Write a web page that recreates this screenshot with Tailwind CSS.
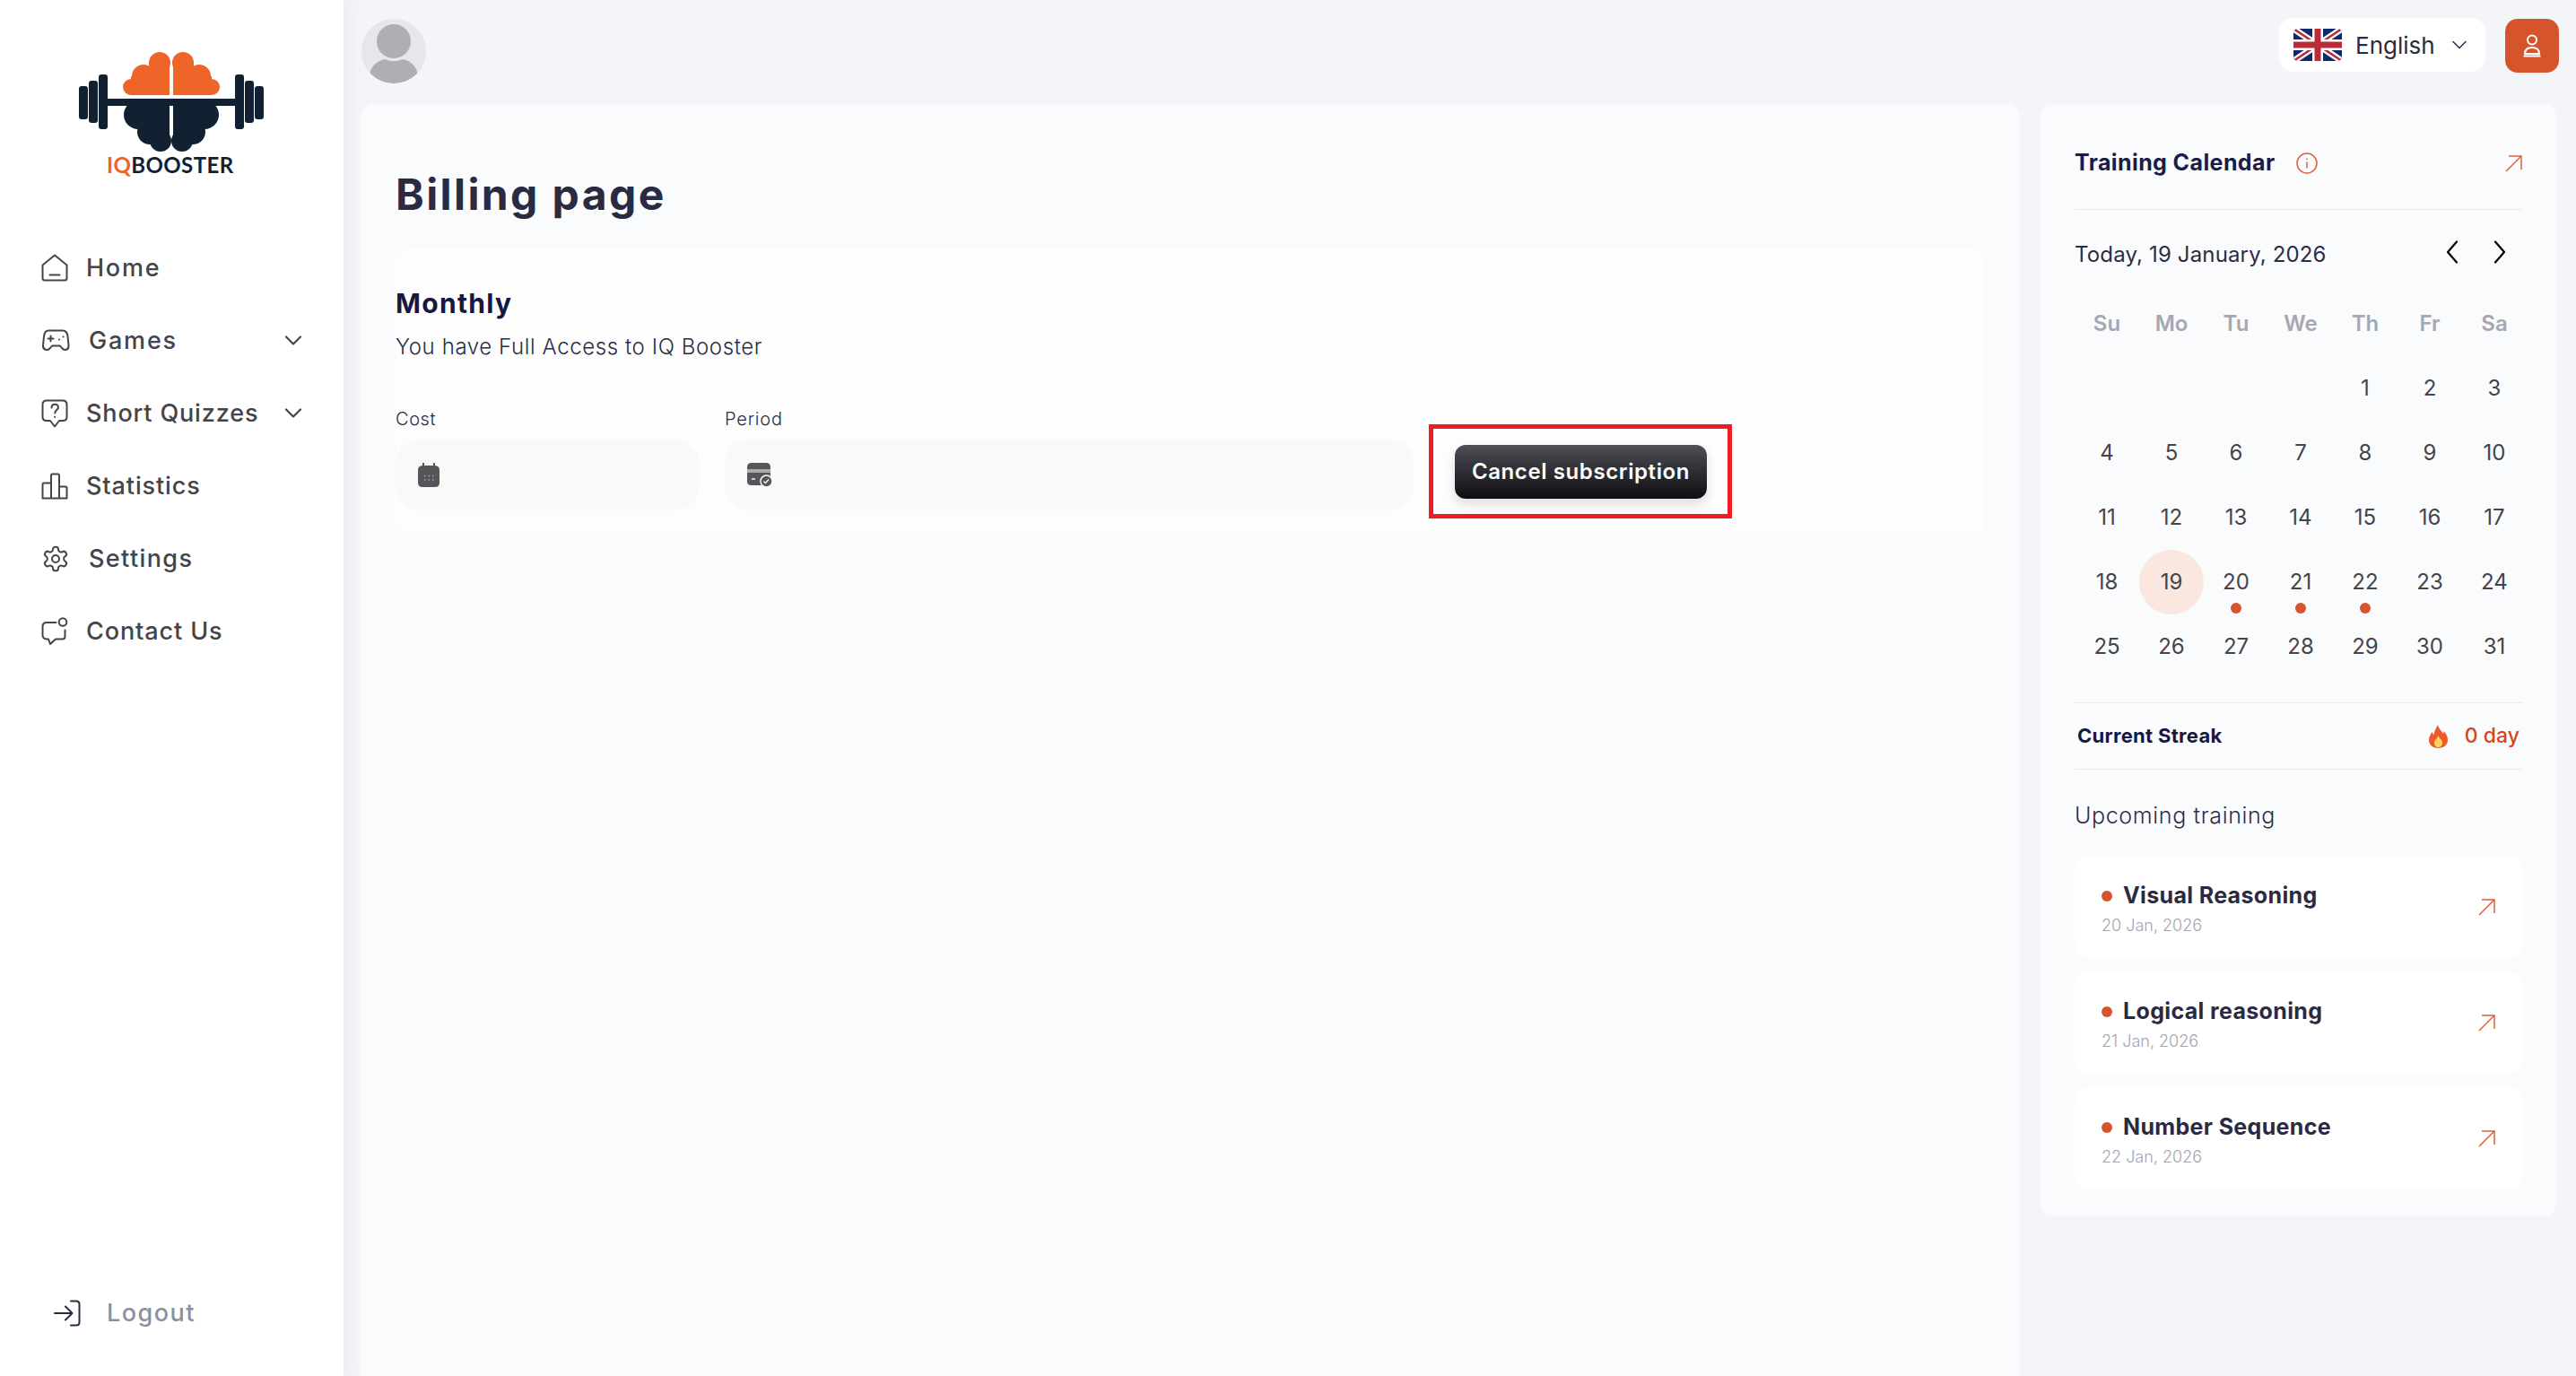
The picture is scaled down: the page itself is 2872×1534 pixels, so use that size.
<!DOCTYPE html>
<html lang="en">
<head>
  <meta charset="UTF-8">
  <meta name="viewport" content="width=device-width, initial-scale=1.0">
  <title>Billing page</title>
  <script src="https://cdn.jsdelivr.net/npm/@tailwindcss/browser@4"></script>
</head>
<body class="bg-[#f4f5f9] font-['Inter',sans-serif] overflow-hidden">
  <div class="flex h-[1534px] w-[2872px]">

    <!-- Sidebar -->
    <aside class="w-[383px] shrink-0 bg-white flex flex-col shadow-[6px_0_14px_rgba(225,227,238,0.5)] z-10">
      <div class="h-[258px] shrink-0">
        <svg width="383" height="210" viewBox="0 0 383 210" class="block">
          <g fill="#ee6429">
            <circle cx="178" cy="70" r="12"/><circle cx="160" cy="85" r="13"/><circle cx="146" cy="97" r="9"/>
            <rect x="146" y="85" width="43" height="21"/><rect x="166" y="70" width="23" height="20"/>
            <circle cx="204" cy="70" r="12"/><circle cx="222" cy="85" r="13"/><circle cx="236" cy="97" r="9"/>
            <rect x="193" y="85" width="43" height="21"/><rect x="193" y="70" width="23" height="20"/>
          </g>
          <g fill="#122131">
            <rect x="88" y="96" width="10" height="37" rx="3"/><rect x="99" y="90" width="10" height="47" rx="3"/><rect x="110" y="83" width="10" height="61" rx="3"/>
            <rect x="262" y="83" width="10" height="61" rx="3"/><rect x="273" y="90" width="10" height="47" rx="3"/><rect x="284" y="96" width="10" height="37" rx="3"/>
            <rect x="120" y="110" width="142" height="8"/>
            <circle cx="154" cy="128" r="16"/><circle cx="167" cy="147" r="14"/><circle cx="179" cy="157" r="12"/>
            <rect x="154" y="116" width="35" height="28"/><rect x="168" y="130" width="21" height="25"/>
            <circle cx="228" cy="128" r="16"/><circle cx="215" cy="147" r="14"/><circle cx="203" cy="157" r="12"/>
            <rect x="193" y="116" width="35" height="28"/><rect x="193" y="130" width="21" height="25"/>
            <rect x="188" y="116" width="6" height="2"/>
          </g>
          <text x="119" y="193" font-family="Lato" font-size="24" font-weight="700" letter-spacing="0.4" fill="#ee6429">IQ<tspan fill="#122131">BOOSTER</tspan></text>
        </svg>
      </div>

      <nav class="flex flex-col pl-[46px] pr-[47px] text-[27px] leading-[40px] font-medium text-[#444449]">
        <a href="#" class="h-[81px] flex items-center">
          <svg width="30" height="31" viewBox="0 0 30 31" fill="none" stroke="#444449" stroke-width="2" stroke-linejoin="round" stroke-linecap="round" class="shrink-0"><path d="M1.500 12.500 15 1.500l13.500 11V27q0 2.500-2.500 2.500H4Q1.500 29.500 1.500 27Z"/><path d="M9.500 23.500h11"/></svg>
          <span class="ml-[20px] tracking-[1.75px]">Home</span>
        </a>
        <a href="#" class="h-[81px] flex items-center">
          <svg width="32" height="25" viewBox="0 0 32 25" fill="none" stroke="#444449" stroke-width="2" stroke-linecap="round" stroke-linejoin="round" class="shrink-0"><path d="M8 1.500h16c3.500 0 5 2.500 5.500 6.500l1 10c.5 5-4.500 6.500-7.500 3l-2-2.500h-9L10 21c-3 3.500-8.500 2-8-3l1-10C3.500 4 4.500 1.500 8 1.500Z"/><path d="M7.500 10.500h6M10.500 7.500v6M20 11.500h.1M24.500 8.500h.1"/></svg>
          <span class="ml-[21px] tracking-[1.8px]">Games</span>
          <svg width="18" height="11" viewBox="0 0 18 11" fill="none" stroke="#444449" stroke-width="2.200" stroke-linecap="round" stroke-linejoin="round" class="ml-auto"><path d="M1 1.500 9 9.500l8-8"/></svg>
        </a>
        <a href="#" class="h-[81px] flex items-center">
          <svg width="30" height="32" viewBox="0 0 30 32" fill="none" stroke="#444449" stroke-width="2" stroke-linecap="round" stroke-linejoin="round" class="shrink-0"><path d="M6 1.500h18q4.500 0 4.500 4.500v14q0 4-4.500 4h-4l-5 6.500-5-6.500H6q-4.500 0-4.500-4V6Q1.500 1.500 6 1.500Z"/><path d="M11.500 9.500c0-5 7.500-5 7.500-.5 0 3-3.800 3-3.800 6.500M15.200 19.800v.1"/></svg>
          <span class="ml-[20px] whitespace-nowrap tracking-[0.85px]">Short Quizzes</span>
          <svg width="18" height="11" viewBox="0 0 18 11" fill="none" stroke="#444449" stroke-width="2.200" stroke-linecap="round" stroke-linejoin="round" class="ml-auto"><path d="M1 1.500 9 9.500l8-8"/></svg>
        </a>
        <a href="#" class="h-[81px] flex items-center">
          <svg width="30" height="30" viewBox="0 0 30 30" fill="none" stroke="#444449" stroke-width="2" stroke-linejoin="round" class="shrink-0"><path d="M1.500 28.500V13q0-1.500 1.500-1.500h8V28.500ZM11 28.500V3q0-1.500 1.500-1.500h6Q20 1.500 20 3V28.500ZM20 28.500V15.500h7q1.500 0 1.500 1.500V28.500Z"/></svg>
          <span class="ml-[20px] tracking-[0.9px]">Statistics</span>
        </a>
        <a href="#" class="h-[81px] flex items-center">
          <svg width="32" height="32" viewBox="0 0 24 24" fill="none" stroke="#444449" stroke-width="1.500" stroke-linecap="round" stroke-linejoin="round" class="shrink-0"><path d="M12.220 2h-.44a2 2 0 0 0-2 2v.18a2 2 0 0 1-1 1.730l-.43.25a2 2 0 0 1-2 0l-.15-.08a2 2 0 0 0-2.730.73l-.22.38a2 2 0 0 0 .73 2.730l.15.1a2 2 0 0 1 1 1.720v.51a2 2 0 0 1-1 1.740l-.15.09a2 2 0 0 0-.73 2.730l.22.38a2 2 0 0 0 2.730.73l.15-.08a2 2 0 0 1 2 0l.43.25a2 2 0 0 1 1 1.730V20a2 2 0 0 0 2 2h.44a2 2 0 0 0 2-2v-.18a2 2 0 0 1 1-1.730l.43-.25a2 2 0 0 1 2 0l.15.08a2 2 0 0 0 2.730-.73l.22-.39a2 2 0 0 0-.73-2.730l-.15-.08a2 2 0 0 1-1-1.740v-.5a2 2 0 0 1 1-1.740l.15-.09a2 2 0 0 0 .73-2.730l-.22-.38a2 2 0 0 0-2.730-.73l-.15.08a2 2 0 0 1-2 0l-.43-.25a2 2 0 0 1-1-1.730V4a2 2 0 0 0-2-2z"/><circle cx="12" cy="12" r="3"/></svg>
          <span class="ml-[21px] tracking-[1.4px]">Settings</span>
        </a>
        <a href="#" class="h-[81px] flex items-center">
          <svg width="30" height="31" viewBox="0 0 30 31" fill="none" stroke="#444449" stroke-width="2" stroke-linecap="round" stroke-linejoin="round" class="shrink-0"><path d="M16.500 6H6Q1.500 6 1.500 10.500V20Q1.500 24 6 24.500L8 24.500l2 5.500 6-5.500h7.500q3 0 3-3V14.500"/><circle cx="24" cy="5.500" r="4.300"/></svg>
          <span class="ml-[20px] tracking-[0.9px]">Contact Us</span>
        </a>
      </nav>

      <a href="#" class="mt-auto mb-[50px] ml-[60px] h-[40px] flex items-center text-[27px] font-medium text-[#8f8f9b]">
        <svg width="30" height="30" viewBox="0 0 30 30" fill="none" stroke="#2a2b42" stroke-width="2" stroke-linecap="round" stroke-linejoin="round" class="shrink-0"><path d="M19 1.500h6q3.500 0 3.500 3.500v20q0 3.500-3.500 3.500h-6M1 15h19M13 7.500l7.500 7.500-7.500 7.500"/></svg>
        <span class="ml-[29px] tracking-[1.5px]">Logout</span>
      </a>
    </aside>

    <!-- Main -->
    <div class="flex-1 min-w-0 flex flex-col">
      <header class="h-[116px] shrink-0 flex items-start pl-[20px] pr-[19px]">
        <svg width="72" height="72" viewBox="0 0 72 72" class="mt-[21px] shrink-0">
          <clipPath id="avatarClip"><circle cx="36" cy="36" r="36"/></clipPath>
          <circle cx="36" cy="36" r="36" fill="#e6e7e9"/>
          <g clip-path="url(#avatarClip)" fill="#aeafb2">
            <circle cx="36" cy="25" r="19"/>
            <path d="M8 72C8 56 14 47 27 45c5 3 13 3 18 0 13 2 19 11 19 27Z"/>
          </g>
        </svg>
        <div class="ml-auto mt-[20px] h-[60px] w-[230px] bg-white rounded-[16px] flex items-center pl-[16px]">
          <svg width="54" height="36" viewBox="0 0 54 36" class="shrink-0">
            <clipPath id="flagClip"><rect width="54" height="36" rx="5"/></clipPath>
            <g clip-path="url(#flagClip)">
              <rect width="54" height="36" fill="#0f2a6b"/>
              <path d="M0 0 54 36M54 0 0 36" stroke="#fff" stroke-width="7"/>
              <path d="M0 0 54 36M54 0 0 36" stroke="#bd2b39" stroke-width="2.500"/>
              <path d="M27 0V36M0 18H54" stroke="#fff" stroke-width="12"/>
              <path d="M27 0V36M0 18H54" stroke="#bd2b39" stroke-width="7"/>
            </g>
          </svg>
          <span class="ml-[15px] text-[26px] text-[#2a2b42]">English</span>
          <svg width="16" height="10" viewBox="0 0 16 10" fill="none" stroke="#2a2b42" stroke-width="1.500" stroke-linecap="round" stroke-linejoin="round" class="ml-auto mr-[21px]"><path d="M1 1.500 8 8.500l7-7"/></svg>
        </div>
        <button class="ml-[22px] mt-[21px] w-[60px] h-[60px] rounded-[14px] bg-[#d6542b] flex items-center justify-center">
          <svg width="20" height="26" viewBox="0 0 20 26" fill="none" stroke="#fff" stroke-width="2"><circle cx="10" cy="6.500" r="5"/><path d="M2 22q0-7 8-7t8 7Z"/><path d="M.5 24.500h19"/></svg>
        </button>
      </header>

      <div class="flex-1 min-h-0 flex pl-[19px] pr-[22px]">
        <!-- Billing card -->
        <main class="w-[1850px] shrink-0 bg-[#fafbfd] rounded-t-[14px] pl-[39px] pr-[40px] pt-[71px]">
          <h1 class="h-[60px] leading-[60px] text-[48px] font-bold tracking-[2.400px] text-[#2a2b42]">Billing page</h1>
          <section class="mt-[30px] h-[321px] bg-[#fdfdfe] rounded-[14px] pt-[41px]">
            <h2 class="h-[40px] leading-[40px] text-[30px] font-bold tracking-[1.300px] text-[#17183f]">Monthly</h2>
            <p class="mt-[13px] h-[32px] leading-[32px] text-[24px] font-light tracking-[0.6px] text-[#2c2c44]">You have Full Access to IQ Booster</p>
            <div class="mt-[50px] flex items-end">
              <div class="w-[338px] shrink-0">
                <label class="block h-[28px] leading-[28px] text-[20px] font-light tracking-[0.6px] text-[#2c2c44]">Cost</label>
                <div class="mt-[9px] h-[79px] rounded-[26px] bg-[#faf9f7] flex items-center pl-[25px]">
                  <svg width="24" height="27" viewBox="0 0 24 27"><path fill="#55555a" d="M5 0h2v3h10V0h2v3q5 .5 5 5v14q0 5-5 5H5q-5 0-5-5V8Q0 3.500 5 3Z"/><path stroke="#a9a9ad" stroke-width="1.500" stroke-dasharray="1.500 3" d="M7 14.500h11M7 19h11"/></svg>
                </div>
              </div>
              <div class="ml-[29px] w-[768px] shrink-0">
                <label class="block h-[28px] leading-[28px] text-[20px] font-light tracking-[0.8px] text-[#2c2c44]">Period</label>
                <div class="mt-[9px] h-[79px] rounded-[26px] bg-[#faf9f7] flex items-center pl-[25px]">
                  <svg width="28" height="27" viewBox="0 0 28 27"><path fill="#55555a" d="M5 0h16q5 0 5 5v16q0 4-5 4H5q-5 0-5-4V5Q0 0 5 0Z"/><rect y="7" width="26" height="4" fill="#a9a9ad"/><path stroke="#faf9f7" stroke-width="1.500" d="M5 18h4"/><circle cx="21.500" cy="20.500" r="6.500" fill="#55555a" stroke="#faf9f7" stroke-width="1.500"/><path d="m18.500 20.500 2 2 3.500-4" fill="none" stroke="#faf9f7" stroke-width="1.300"/></svg>
                </div>
              </div>
              <div class="relative ml-[46px] mb-[13px]">
                <button class="w-[281px] h-[60px] rounded-[12px] bg-gradient-to-b from-[#4f4f57] to-[#0f0f13] text-white text-[24px] font-semibold tracking-[0.6px] shadow-[0_6px_12px_rgba(60,40,40,0.15)]">Cancel subscription</button>
                <div class="absolute -left-[29px] -right-[28px] -top-[23px] -bottom-[22px] border-[5px] border-[#ee1c25] pointer-events-none"></div>
              </div>
            </div>
          </section>
        </main>

        <!-- Calendar card -->
        <aside class="ml-[23px] w-[575px] shrink-0 self-start bg-[#fafbfd] rounded-[14px] px-[38px] pb-[30px]">
          <div class="pt-[48px] pb-[33px] border-b border-[#e8eaf0]">
            <div class="h-[36px] flex items-center">
              <span class="text-[25px] font-bold tracking-[0.4px] text-[#1a1c4a]">Training Calendar</span>
              <svg width="24" height="24" viewBox="0 0 24 24" fill="none" stroke="#e0603a" stroke-width="1.500" class="ml-[23px]"><circle cx="12" cy="12" r="11"/><path d="M12 10.500v7M12 6.500v1.500"/></svg>
              <svg width="19" height="19" viewBox="0 0 19 19" fill="none" stroke="#e0603a" stroke-width="1.500" class="ml-auto"><path d="M1 18 18 1M4 1h14v15"/></svg>
            </div>
          </div>
          <div class="mt-[32px] h-[36px] flex items-center text-[24px] tracking-[0.15px] text-[#2c2c44]">
            <span>Today, 19 January, 2026</span>
            <svg width="14" height="26" viewBox="0 0 14 26" fill="none" stroke="#000" stroke-width="2.200" stroke-linecap="round" stroke-linejoin="round" class="ml-auto mr-[39px] -mt-[6px]"><path d="M12 1.500 2 13l10 11.500"/></svg>
            <svg width="14" height="26" viewBox="0 0 14 26" fill="none" stroke="#000" stroke-width="2.200" stroke-linecap="round" stroke-linejoin="round" class="mr-[18px] -mt-[6px]"><path d="M2 1.500 12 13 2 24.500"/></svg>
          </div>

          <div class="mt-[23px] w-[504px] grid grid-cols-7 auto-rows-[72px] text-center text-[24px] text-[#444449]">
            <div class="flex items-center justify-center font-semibold text-[#a5a7b3]">Su</div>
            <div class="flex items-center justify-center font-semibold text-[#a5a7b3]">Mo</div>
            <div class="flex items-center justify-center font-semibold text-[#a5a7b3]">Tu</div>
            <div class="flex items-center justify-center font-semibold text-[#a5a7b3]">We</div>
            <div class="flex items-center justify-center font-semibold text-[#a5a7b3]">Th</div>
            <div class="flex items-center justify-center font-semibold text-[#a5a7b3]">Fr</div>
            <div class="flex items-center justify-center font-semibold text-[#a5a7b3]">Sa</div>

            <div></div><div></div><div></div><div></div>
            <div class="flex items-center justify-center">1</div>
            <div class="flex items-center justify-center">2</div>
            <div class="flex items-center justify-center">3</div>

            <div class="flex items-center justify-center">4</div>
            <div class="flex items-center justify-center">5</div>
            <div class="flex items-center justify-center">6</div>
            <div class="flex items-center justify-center">7</div>
            <div class="flex items-center justify-center">8</div>
            <div class="flex items-center justify-center">9</div>
            <div class="flex items-center justify-center">10</div>

            <div class="flex items-center justify-center">11</div>
            <div class="flex items-center justify-center">12</div>
            <div class="flex items-center justify-center">13</div>
            <div class="flex items-center justify-center">14</div>
            <div class="flex items-center justify-center">15</div>
            <div class="flex items-center justify-center">16</div>
            <div class="flex items-center justify-center">17</div>

            <div class="flex items-center justify-center">18</div>
            <div class="flex items-center justify-center rounded-full bg-[#f9e7e0]">19</div>
            <div class="relative flex items-center justify-center">20<span class="absolute left-[30px] top-[59px] w-[12px] h-[12px] rounded-full bg-[#d6542b]"></span></div>
            <div class="relative flex items-center justify-center">21<span class="absolute left-[30px] top-[59px] w-[12px] h-[12px] rounded-full bg-[#d6542b]"></span></div>
            <div class="relative flex items-center justify-center">22<span class="absolute left-[30px] top-[59px] w-[12px] h-[12px] rounded-full bg-[#d6542b]"></span></div>
            <div class="flex items-center justify-center">23</div>
            <div class="flex items-center justify-center">24</div>

            <div class="flex items-center justify-center">25</div>
            <div class="flex items-center justify-center">26</div>
            <div class="flex items-center justify-center">27</div>
            <div class="flex items-center justify-center">28</div>
            <div class="flex items-center justify-center">29</div>
            <div class="flex items-center justify-center">30</div>
            <div class="flex items-center justify-center">31</div>
          </div>

          <div class="mt-[26px] h-[75px] border-y border-[#e8eaf0] flex items-center pl-[3px] pr-[3px]">
            <span class="text-[22px] font-bold tracking-[0.3px] text-[#17183f]">Current Streak</span>
            <svg width="21" height="26" viewBox="0 0 21 26" class="ml-auto"><path fill="#ea5a2a" d="M10 0c1 5 4 6 6 10 .5-1 .5-2 .5-3 3 3 4.500 6 4.500 10 0 5-4 9-10.500 9S0 22 0 17c0-4 2-6 3.500-9 .5 1.500 1 2.500 2 3C6 7 8 4 10 0Z"/><path fill="#fdd35a" d="M10.500 12c.5 2.500 4.500 4.500 4.500 8 0 3-2 5-4.500 5S6 23 6 20c0-3 3.500-5 4.500-8Z"/></svg>
            <span class="ml-[19px] text-[23px] font-medium text-[#d3461f]">0 day</span>
          </div>

          <h3 class="mt-[33px] h-[36px] leading-[36px] text-[25px] font-light tracking-[0.65px] text-[#2c2c4a]">Upcoming training</h3>

          <div class="mt-[27px] flex flex-col gap-[15px]">
            <a href="#" class="h-[114px] rounded-[16px] bg-white flex items-center justify-between pl-[30px] pr-[30px]">
              <div class="pt-[6px]">
                <div class="h-[32px] flex items-center"><span class="w-[12px] h-[12px] rounded-full bg-[#d6542b]"></span><span class="ml-[12px] text-[25px] font-bold tracking-[0.35px] text-[#2a2b42]">Visual Reasoning</span></div>
                <div class="mt-[3px] h-[28px] leading-[28px] text-[18px] font-light text-[#a3a3ad]">20 Jan, 2026</div>
              </div>
              <svg width="19" height="19" viewBox="0 0 19 19" fill="none" stroke="#e0603a" stroke-width="1.500"><path d="M1 18 18 1M4 1h14v15"/></svg>
            </a>
            <a href="#" class="h-[114px] rounded-[16px] bg-white flex items-center justify-between pl-[30px] pr-[30px]">
              <div class="pt-[6px]">
                <div class="h-[32px] flex items-center"><span class="w-[12px] h-[12px] rounded-full bg-[#d6542b]"></span><span class="ml-[12px] text-[25px] font-bold tracking-[0.35px] text-[#2a2b42]">Logical reasoning</span></div>
                <div class="mt-[3px] h-[28px] leading-[28px] text-[18px] font-light text-[#a3a3ad]">21 Jan, 2026</div>
              </div>
              <svg width="19" height="19" viewBox="0 0 19 19" fill="none" stroke="#e0603a" stroke-width="1.500"><path d="M1 18 18 1M4 1h14v15"/></svg>
            </a>
            <a href="#" class="h-[114px] rounded-[16px] bg-white flex items-center justify-between pl-[30px] pr-[30px]">
              <div class="pt-[6px]">
                <div class="h-[32px] flex items-center"><span class="w-[12px] h-[12px] rounded-full bg-[#d6542b]"></span><span class="ml-[12px] text-[25px] font-bold tracking-[0.35px] text-[#2a2b42]">Number Sequence</span></div>
                <div class="mt-[3px] h-[28px] leading-[28px] text-[18px] font-light text-[#a3a3ad]">22 Jan, 2026</div>
              </div>
              <svg width="19" height="19" viewBox="0 0 19 19" fill="none" stroke="#e0603a" stroke-width="1.500"><path d="M1 18 18 1M4 1h14v15"/></svg>
            </a>
          </div>
        </aside>
      </div>
    </div>
  </div>
</body>
</html>
